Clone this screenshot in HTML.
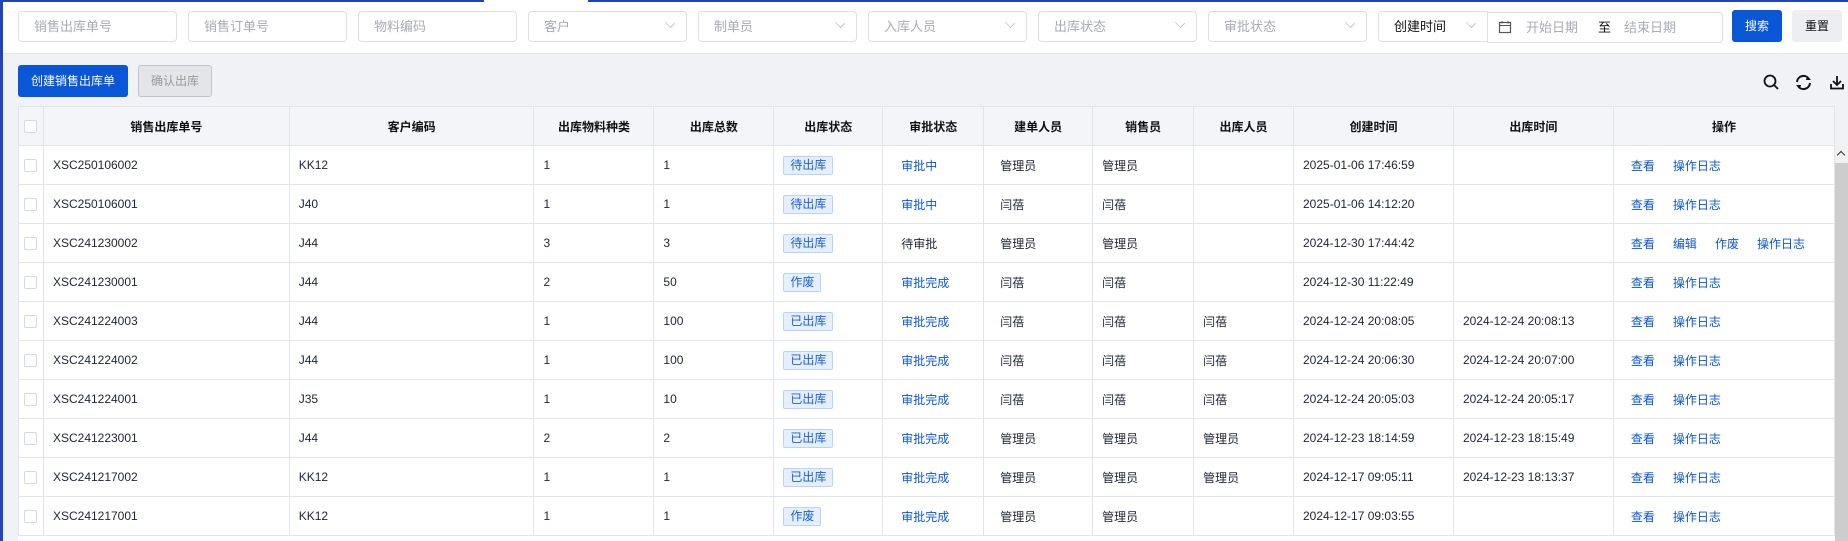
<!DOCTYPE html>
<html style="height:541px;overflow:hidden"><head><meta charset="utf-8"><style>
*{box-sizing:border-box;margin:0;padding:0}
body{width:1848px;height:541px;overflow:hidden;background:#f0f2f5;font-family:"Liberation Sans","Noto Sans CJK SC",sans-serif;font-size:12px;color:#1d2433;position:relative}
.a{position:absolute}
.top{left:0;top:0;width:1848px;height:54px;background:#fff;border-bottom:1px solid #e4e7ed}
.inp{position:absolute;top:11px;height:31px;width:159px;border:1px solid #dcdfe6;border-radius:4px;color:#a8abb2;font-size:13px;line-height:29px;padding-left:15px;background:#fff}
.inp .ch{position:absolute;right:12px;width:8px;height:8px;border-right:1px solid #c0c4cc;border-bottom:1px solid #c0c4cc;transform:rotate(45deg) scale(1,.8);top:7px}
.btn{position:absolute;border-radius:3px;text-align:center;font-size:12px}
.wrap{position:absolute;left:18px;top:106px;width:1817px;height:435px;overflow:hidden;background:#fff}
table{border-collapse:collapse;table-layout:fixed;background:#fff}
td,th{border:1px solid #e0e5ec;height:39px;padding:0 9px;white-space:nowrap;overflow:hidden;text-align:left;font-weight:normal}
th{background:#f3f5f9;text-align:center;font-weight:bold;color:#111}
.cb{display:inline-block;width:13px;height:13px;border:1px solid #d5d9e0;border-radius:2px;background:#fff;vertical-align:middle}
td.c,th.c{padding:0;text-align:center}
td:nth-child(7){padding-left:18px}
td:nth-child(8){padding-left:16px}
.tag{display:inline-block;height:19px;line-height:17px;padding:0 6px;border:1px solid #b8d3fb;background:#e5efff;color:#1b5fd4;border-radius:2px}
.bl{color:#0b57d0}
.op a{color:#0b57d0;margin-right:18px;text-decoration:none}
</style></head><body>
<div class="a" style="left:0;top:0;width:3px;height:541px;background:#1f45b8;z-index:5"></div>
<div class="a top"></div>
<div class="a" style="left:0;top:0;width:484px;height:2px;background:#1f45b8;z-index:5"></div>
<div class="a" style="left:588px;top:0;width:1260px;height:2px;background:#1f45b8;z-index:5"></div>

<div class="inp" style="left:18px">销售出库单号</div>
<div class="inp" style="left:188px">销售订单号</div>
<div class="inp" style="left:358px">物料编码</div>
<div class="inp" style="left:528px">客户<span class="ch"></span></div>
<div class="inp" style="left:698px">制单员<span class="ch"></span></div>
<div class="inp" style="left:868px">入库人员<span class="ch"></span></div>
<div class="inp" style="left:1038px">出库状态<span class="ch"></span></div>
<div class="inp" style="left:1208px">审批状态<span class="ch"></span></div>
<div class="inp" style="left:1378px;width:110px;color:#111;border-radius:4px 0 0 4px">创建时间<span class="ch"></span></div>
<div class="inp" style="left:1487px;width:236px;border-radius:0 4px 4px 0;top:12px;height:31px">
<svg class="a" style="left:10px;top:7px" width="14" height="14" viewBox="0 0 14 14"><rect x="1.5" y="2.5" width="11" height="10" fill="none" stroke="#555" stroke-width="1.2"/><line x1="1.5" y1="5.5" x2="12.5" y2="5.5" stroke="#555"/><line x1="4" y1="1" x2="4" y2="3.5" stroke="#555"/><line x1="10" y1="1" x2="10" y2="3.5" stroke="#555"/></svg>
<span class="a" style="left:38px">开始日期</span><span class="a" style="left:110px;color:#111">至</span><span class="a" style="left:136px">结束日期</span></div>
<div class="btn" style="left:1732px;top:10px;width:50px;height:32px;line-height:32px;background:#0956d6;color:#fff">搜索</div>
<div class="btn" style="left:1792px;top:10px;width:50px;height:32px;line-height:32px;background:#eceef2;color:#111">重置</div>

<div class="btn" style="left:18px;top:65px;width:110px;height:32px;line-height:32px;background:#0956d6;color:#fff">创建销售出库单</div>
<div class="btn" style="left:138px;top:65px;width:74px;height:32px;line-height:30px;background:#e4e5e8;border:1px solid #c2c4c9;color:#999">确认出库</div>

<svg class="a" style="left:1762px;top:74px" width="20" height="16" viewBox="0 0 20 16"><circle cx="8" cy="7" r="5.5" fill="none" stroke="#111" stroke-width="1.8"/><line x1="12" y1="11" x2="16" y2="15" stroke="#111" stroke-width="1.8"/></svg>
<svg class="a" style="left:1794px;top:74px" width="19" height="17" viewBox="0 0 19 17"><path d="M3 8 A6.5 6.5 0 0 1 15 5" fill="none" stroke="#111" stroke-width="2"/><path d="M16 9 A6.5 6.5 0 0 1 4 12" fill="none" stroke="#111" stroke-width="2"/><path d="M13 2 L17 6 L12 6Z" fill="#111"/><path d="M6 15 L2 11 L7 11Z" fill="#111"/></svg>
<svg class="a" style="left:1830px;top:75px" width="14" height="15" viewBox="0 0 14 15"><line x1="7" y1="1" x2="7" y2="9" stroke="#111" stroke-width="1.8"/><path d="M3 6 L7 10 L11 6" fill="none" stroke="#111" stroke-width="1.8"/><path d="M1 9 V13.5 H13 V9" fill="none" stroke="#111" stroke-width="1.8"/></svg>

<div class="wrap"><table>
<colgroup><col style="width:25px"><col style="width:246px"><col style="width:245px"><col style="width:120px"><col style="width:120px"><col style="width:109px"><col style="width:101px"><col style="width:109px"><col style="width:101px"><col style="width:100px"><col style="width:160px"><col style="width:160px"><col style="width:221px"></colgroup>
<tr><th class="c"><span class="cb"></span></th><th>销售出库单号</th><th>客户编码</th><th>出库物料种类</th><th>出库总数</th><th>出库状态</th><th>审批状态</th><th>建单人员</th><th>销售员</th><th>出库人员</th><th>创建时间</th><th>出库时间</th><th>操作</th></tr>
<tr><td class="c"><span class="cb"></span></td><td>XSC250106002</td><td>KK12</td><td>1</td><td>1</td><td><span class="tag">待出库</span></td><td class="bl">审批中</td><td>管理员</td><td>管理员</td><td></td><td>2025-01-06 17:46:59</td><td></td><td class="op" style="padding-left:17px"><a>查看</a><a>操作日志</a></td></tr>
<tr><td class="c"><span class="cb"></span></td><td>XSC250106001</td><td>J40</td><td>1</td><td>1</td><td><span class="tag">待出库</span></td><td class="bl">审批中</td><td>闫蓓</td><td>闫蓓</td><td></td><td>2025-01-06 14:12:20</td><td></td><td class="op" style="padding-left:17px"><a>查看</a><a>操作日志</a></td></tr>
<tr><td class="c"><span class="cb"></span></td><td>XSC241230002</td><td>J44</td><td>3</td><td>3</td><td><span class="tag">待出库</span></td><td>待审批</td><td>管理员</td><td>管理员</td><td></td><td>2024-12-30 17:44:42</td><td></td><td class="op" style="padding-left:17px"><a>查看</a><a>编辑</a><a>作废</a><a>操作日志</a></td></tr>
<tr><td class="c"><span class="cb"></span></td><td>XSC241230001</td><td>J44</td><td>2</td><td>50</td><td><span class="tag">作废</span></td><td class="bl">审批完成</td><td>闫蓓</td><td>闫蓓</td><td></td><td>2024-12-30 11:22:49</td><td></td><td class="op" style="padding-left:17px"><a>查看</a><a>操作日志</a></td></tr>
<tr><td class="c"><span class="cb"></span></td><td>XSC241224003</td><td>J44</td><td>1</td><td>100</td><td><span class="tag">已出库</span></td><td class="bl">审批完成</td><td>闫蓓</td><td>闫蓓</td><td>闫蓓</td><td>2024-12-24 20:08:05</td><td>2024-12-24 20:08:13</td><td class="op" style="padding-left:17px"><a>查看</a><a>操作日志</a></td></tr>
<tr><td class="c"><span class="cb"></span></td><td>XSC241224002</td><td>J44</td><td>1</td><td>100</td><td><span class="tag">已出库</span></td><td class="bl">审批完成</td><td>闫蓓</td><td>闫蓓</td><td>闫蓓</td><td>2024-12-24 20:06:30</td><td>2024-12-24 20:07:00</td><td class="op" style="padding-left:17px"><a>查看</a><a>操作日志</a></td></tr>
<tr><td class="c"><span class="cb"></span></td><td>XSC241224001</td><td>J35</td><td>1</td><td>10</td><td><span class="tag">已出库</span></td><td class="bl">审批完成</td><td>闫蓓</td><td>闫蓓</td><td>闫蓓</td><td>2024-12-24 20:05:03</td><td>2024-12-24 20:05:17</td><td class="op" style="padding-left:17px"><a>查看</a><a>操作日志</a></td></tr>
<tr><td class="c"><span class="cb"></span></td><td>XSC241223001</td><td>J44</td><td>2</td><td>2</td><td><span class="tag">已出库</span></td><td class="bl">审批完成</td><td>管理员</td><td>管理员</td><td>管理员</td><td>2024-12-23 18:14:59</td><td>2024-12-23 18:15:49</td><td class="op" style="padding-left:17px"><a>查看</a><a>操作日志</a></td></tr>
<tr><td class="c"><span class="cb"></span></td><td>XSC241217002</td><td>KK12</td><td>1</td><td>1</td><td><span class="tag">已出库</span></td><td class="bl">审批完成</td><td>管理员</td><td>管理员</td><td>管理员</td><td>2024-12-17 09:05:11</td><td>2024-12-23 18:13:37</td><td class="op" style="padding-left:17px"><a>查看</a><a>操作日志</a></td></tr>
<tr><td class="c"><span class="cb"></span></td><td>XSC241217001</td><td>KK12</td><td>1</td><td>1</td><td><span class="tag">作废</span></td><td class="bl">审批完成</td><td>管理员</td><td>管理员</td><td></td><td>2024-12-17 09:03:55</td><td></td><td class="op" style="padding-left:17px"><a>查看</a><a>操作日志</a></td></tr>
</table></div>
<div class="a" style="left:1835px;top:145px;width:13px;height:396px;background:#cdcdcd"></div>
<div class="a" style="left:1835px;top:145px;width:13px;height:18px;background:#f1f1f1"></div>
<div class="a" style="left:1838px;top:152px;width:6px;height:6px;border-left:1.5px solid #333;border-top:1.5px solid #333;transform:rotate(45deg)"></div>
</body></html>
